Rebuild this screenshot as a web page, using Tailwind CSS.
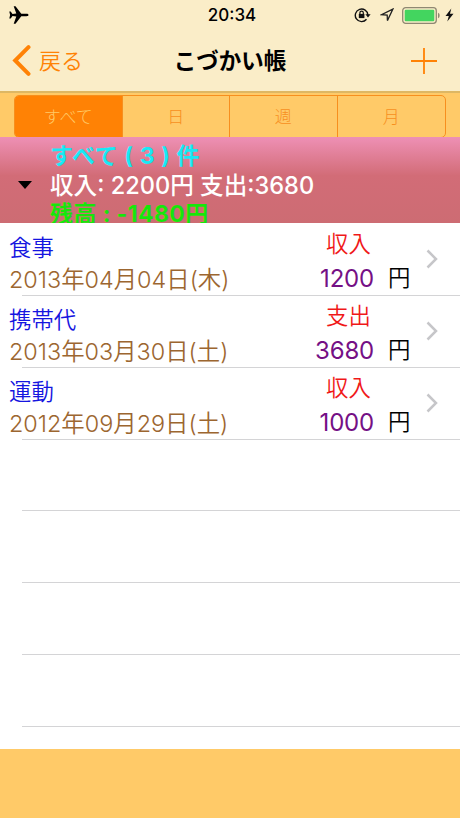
<!DOCTYPE html>
<html lang="ja">
<head>
    <meta charset="UTF-8">
    <meta name="viewport" content="width=device-width, initial-scale=1.0">
    <title>こづかい帳</title>
    <script src="https://cdn.jsdelivr.net/npm/@tailwindcss/browser@4"></script>
</head>
<body class="w-[460px] h-[818px] overflow-hidden flex flex-col bg-[#ffca68] font-['Inter','Noto_Sans_CJK_JP',sans-serif] whitespace-nowrap">

    <!-- Status bar + navigation -->
    <header class="h-[93px] shrink-0 bg-[#faedc8] border-b-2 border-[#deb763]">
        <div class="h-[30px] grid grid-cols-3 items-center">
            <svg class="ml-2 w-[21px] h-[18px]" viewBox="0 0 20 18" fill="#000">
                <path d="M20 9c0-.8-.8-1.200-2-1.200h-5.200L7 .3H5.200l2.600 7.300L4 7.900 2.200 5.600H.8L1.600 9l-.8 3.400h1.400L4 10.100l3.800.3-2.600 7.300H7l5.800-7.500H18c1.200 0 2-.4 2-1.200z"/>
            </svg>
            <span class="text-center text-[17px] font-medium leading-none pl-1 pt-px">20:34</span>
            <div class="flex items-center justify-end pr-[6px]">
                <!-- Rotation lock -->
                <svg class="w-[17px] h-4" viewBox="0 0 17 16" fill="none" stroke="#111" stroke-width="1.400">
                    <path d="M12.500 12.300A6.300 6.300 0 1 1 13.900 8"/>
                    <path d="M11.400 7.200h5.200L14 10.500z" fill="#111" stroke="none"/>
                    <path d="M5.900 7V5.800a1.700 1.700 0 0 1 3.400 0V7" stroke-width="1.200"/>
                    <path d="M4.800 6.900h5.600v4.200H4.800z" fill="#111" stroke="none"/>
                </svg>
                <!-- Location -->
                <svg class="ml-[9px] w-[14px] h-[14px]" viewBox="0 0 14 14" fill="none" stroke="#222" stroke-width="1.300">
                    <path d="M12.800 1.200 1.500 6.700l5.700.4.200 5.500z"/>
                </svg>
                <!-- Battery -->
                <svg class="ml-[8px] w-[39px] h-[17px]" viewBox="0 0 39 17">
                    <rect x=".7" y=".7" width="33.600" height="15.600" rx="3" fill="none" stroke="#8f8872" stroke-width="1.300"/>
                    <rect x="2.700" y="2.700" width="29.600" height="11.600" rx="1.200" fill="#43d55f"/>
                    <path d="M36 5.800c2.200.6 2.200 4.800 0 5.400z" fill="#8f8872"/>
                </svg>
                <svg class="ml-[4px] w-[9px] h-[14px]" viewBox="0 0 8 14" fill="#111">
                    <path d="M5.800.500 0 8h3.300L1.800 13.500 8 5.800H4.500z"/>
                </svg>
            </div>
        </div>
        <nav class="h-[61px] grid grid-cols-3 items-center">
            <a class="flex items-center text-[#ff8205]">
                <svg class="ml-3 w-[19px] h-[31px]" viewBox="0 0 19 31" fill="none" stroke="currentColor" stroke-width="4" stroke-linecap="round">
                    <path d="M16.500 2.200 3.200 15.500l13.300 13.300"/>
                </svg>
                <span class="ml-2 text-[22px] font-[350] leading-none">戻る</span>
            </a>
            <h1 class="text-center text-[22.500px] font-bold leading-none pt-[2px]">こづかい帳</h1>
            <svg class="justify-self-end mr-[23px] w-[26px] h-[26px]" viewBox="0 0 26 26" stroke="#ff8205" stroke-width="1.800">
                <path d="M13 0v26M0 13h26"/>
            </svg>
        </nav>
    </header>

    <!-- Period selector, its lower edge runs under the summary -->
    <div class="h-11 shrink-0 overflow-hidden px-[14px] pt-[2px]">
        <div class="h-[43px] grid grid-cols-4 rounded-[5px] border-[1.500px] border-[#f78f1e] overflow-hidden text-[17px] font-light text-[#f78f1e] text-center leading-[42px] divide-x divide-[#f78f1e]">
            <span class="bg-[#ff8205] text-[#ffca68]">すべて</span>
            <span>日</span>
            <span>週</span>
            <span>月</span>
        </div>
    </div>

    <!-- Summary -->
    <section class="h-[86px] shrink-0 overflow-hidden flex items-start bg-linear-to-b from-[#ee90b5] via-[#d26c77] via-45% to-[#cd6c73] text-[23.600px] font-semibold">
        <svg class="ml-[18px] mt-[44px] w-[14px] h-[8px]" viewBox="0 0 14 8"><path d="M0 0h14L7 8z"/></svg>
        <div class="ml-[18px] mt-[5px] leading-[29px]">
            <p class="text-[#18e9f5] h-[29px] text-[23px] font-bold tracking-[0.600px]">すべて ( 3 ) 件</p>
            <p class="text-white h-[29px] font-medium">収入: 2200円 支出:3680</p>
            <p class="text-[#17e60b] h-[29px] text-[23px] font-bold tracking-[0.400px]">残高 : -1480円</p>
        </div>
    </section>

    <!-- Entries -->
    <main class="h-[526px] shrink-0 overflow-hidden bg-white text-[22.400px] font-[350] leading-8">
        <div class="h-[72px] relative flex pl-[9px]">
            <div class="w-[299px] pt-[9px]">
                <p class="text-[#1515e0]">食事</p>
                <p class="text-[#9c6630] text-[23.400px]">2013年04月04日(木)</p>
            </div>
            <div class="w-[80px] pt-[5px]">
                <p class="text-[#f01818] text-center pl-px">収入</p>
                <p class="text-[#751085] text-[24px] font-normal pt-[3px] pr-[14px] text-right tracking-[-0.200px]">1200</p>
            </div>
            <span class="pt-[39px]">円</span>
            <svg class="ml-[16px] mt-[26px] w-3 h-5" viewBox="0 0 12 20" fill="none" stroke="#c6c6c9" stroke-width="2.500"><path d="m1.500 1.500 8.500 8.500-8.500 8.500"/></svg>
            <i class="absolute left-[22px] right-0 bottom-[-1px] h-px bg-[#d4d4d6]"></i>
        </div>
        <div class="h-[72px] relative flex pl-[9px]">
            <div class="w-[299px] pt-[9px]">
                <p class="text-[#1515e0]">携帯代</p>
                <p class="text-[#9c6630] text-[23.400px]">2013年03月30日(土)</p>
            </div>
            <div class="w-[80px] pt-[5px]">
                <p class="text-[#f01818] text-center pl-px">支出</p>
                <p class="text-[#751085] text-[24px] font-normal pt-[3px] pr-[14px] text-right tracking-[-0.200px]">3680</p>
            </div>
            <span class="pt-[39px]">円</span>
            <svg class="ml-[16px] mt-[26px] w-3 h-5" viewBox="0 0 12 20" fill="none" stroke="#c6c6c9" stroke-width="2.500"><path d="m1.500 1.500 8.500 8.500-8.500 8.500"/></svg>
            <i class="absolute left-[22px] right-0 bottom-[-1px] h-px bg-[#d4d4d6]"></i>
        </div>
        <div class="h-[72px] relative flex pl-[9px]">
            <div class="w-[299px] pt-[9px]">
                <p class="text-[#1515e0]">運動</p>
                <p class="text-[#9c6630] text-[23.400px]">2012年09月29日(土)</p>
            </div>
            <div class="w-[80px] pt-[5px]">
                <p class="text-[#f01818] text-center pl-px">収入</p>
                <p class="text-[#751085] text-[24px] font-normal pt-[3px] pr-[14px] text-right tracking-[-0.200px]">1000</p>
            </div>
            <span class="pt-[39px]">円</span>
            <svg class="ml-[16px] mt-[26px] w-3 h-5" viewBox="0 0 12 20" fill="none" stroke="#c6c6c9" stroke-width="2.500"><path d="m1.500 1.500 8.500 8.500-8.500 8.500"/></svg>
            <i class="absolute left-[22px] right-0 bottom-[-1px] h-px bg-[#d4d4d6]"></i>
        </div>
        <!-- Empty rows -->
        <div class="ml-[22px] mt-px">
            <div class="h-[71px] border-b border-[#d4d4d6]"></div>
            <div class="h-[72px] border-b border-[#d4d4d6]"></div>
            <div class="h-[72px] border-b border-[#d4d4d6]"></div>
            <div class="h-[72px] border-b border-[#d4d4d6]"></div>
        </div>
    </main>
</body>
</html>
